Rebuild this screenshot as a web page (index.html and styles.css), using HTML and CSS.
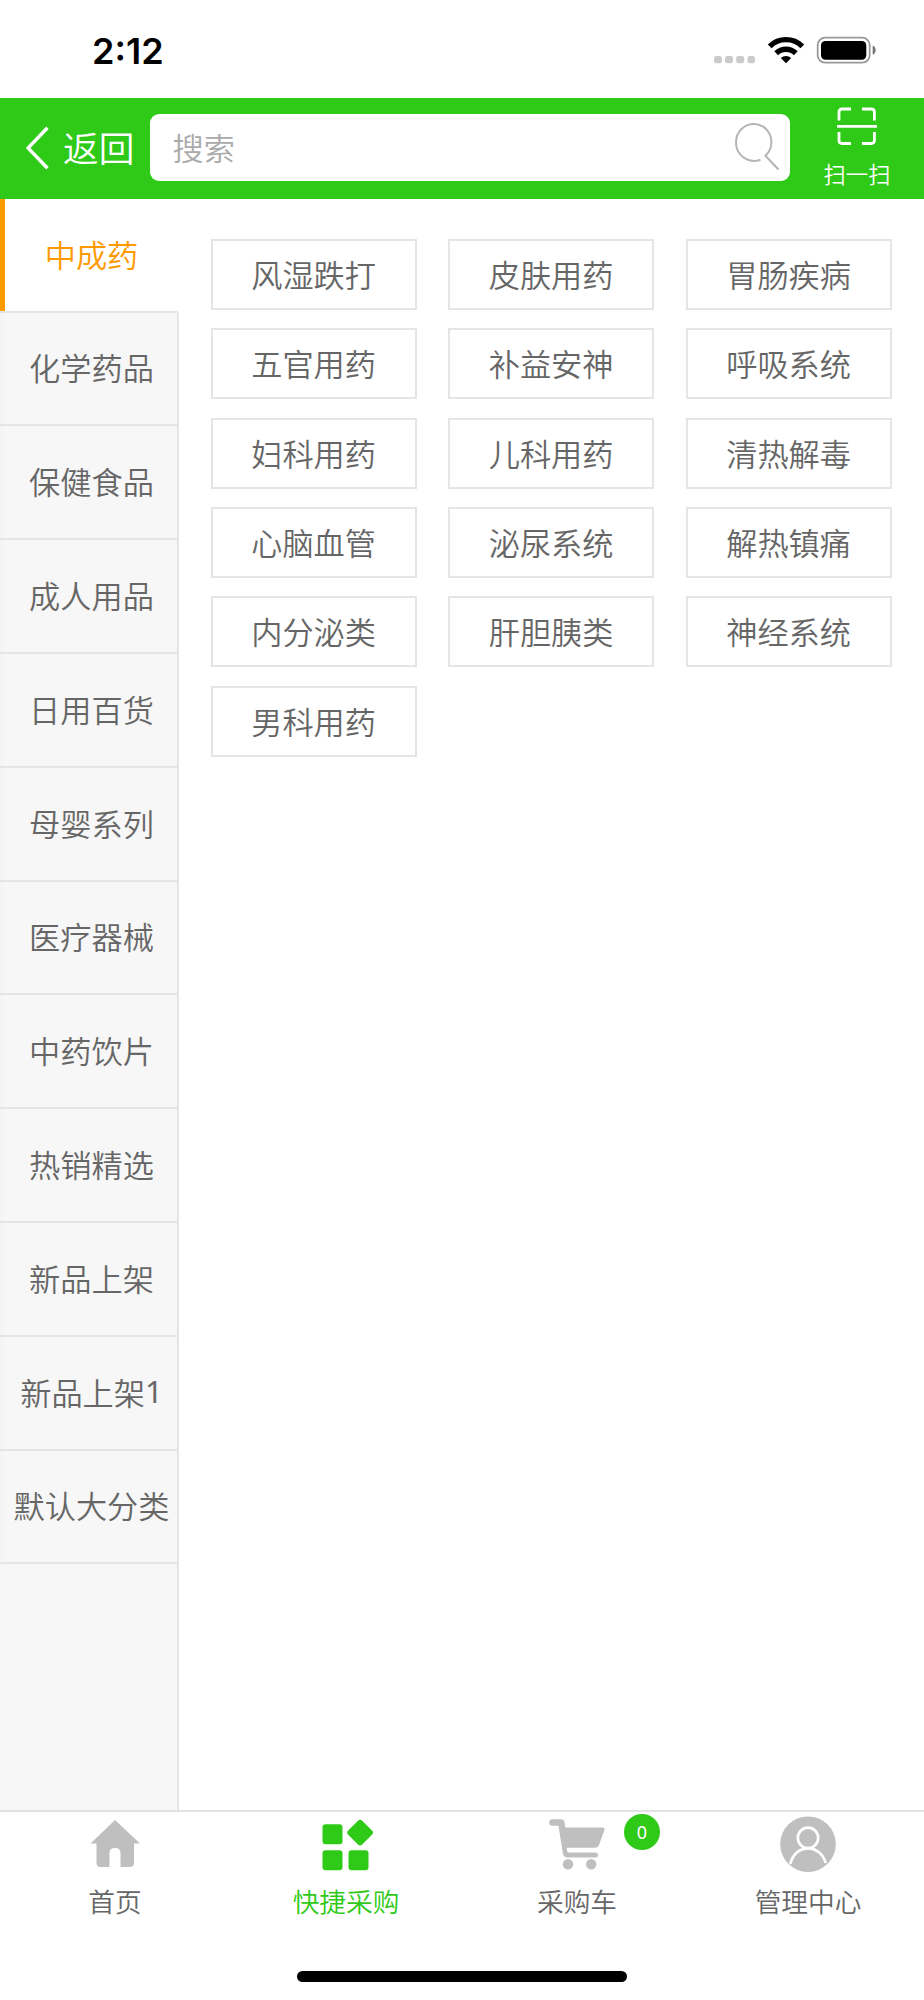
FILE: index.html
```html
<!DOCTYPE html>
<html lang="zh-CN">
<head>
<meta charset="utf-8">
<title>快捷采购</title>
<link rel="stylesheet" href="styles.css">
</head>
<body>
<div class="app">
  <div class="status">
    <span class="time">2:12</span>
    <svg class="status-icons" width="164" height="30" viewBox="0 0 164 30">
      <g fill="#cbcbcb"><rect x="0" y="20" width="8" height="7.300" rx="2.400"/><rect x="11" y="20" width="8" height="7.300" rx="2.400"/><rect x="22.200" y="20" width="8" height="7.300" rx="2.400"/><rect x="33.500" y="20" width="7.500" height="7.300" rx="2.400"/></g>
      <g fill="none" stroke="#000" stroke-width="5.400"><path d="M55.700 10.300a23.200 23.200 0 0 1 32.600 0"/><path d="M62.200 17.200a14.100 14.100 0 0 1 19.600 0"/></g>
      <path d="M72 27.300l-5.200-5.300a7.500 7.500 0 0 1 10.400 0z"/>
      <rect x="103.700" y="1.700" width="52" height="25" rx="7.500" fill="none" stroke="#999" stroke-width="1.800"/>
      <rect x="107" y="5" width="45.300" height="18.700" rx="4.500"/>
      <path d="M158.700 9.500c4 1.500 4 7.600 0 9.200z" fill="#777"/>
    </svg>
  </div>
  <header class="header">
    <a class="back">
      <svg width="24" height="44" viewBox="0 0 24 44"><path d="M21.500 1.700L2 22l19.500 20.300" fill="none" stroke="#fff" stroke-width="3.400"/></svg>
      <span class="label">返回</span>
    </a>
    <div class="search">
      <span class="label">搜索</span>
      <svg width="46" height="50" viewBox="0 0 46 50" fill="none" stroke="#b5b5b5" stroke-width="2"><path d="M26.500 37.700C14 42.300 2 33 2 20.500 2 10 10 2 19.800 2s17.600 8 17.600 18.500c0 5-2.200 9.800-6 13.300L44.500 47.500"/></svg>
    </div>
    <a class="scan">
      <svg width="42" height="38" viewBox="0 0 42 38" fill="none" stroke="#fff" stroke-width="2.800"><path d="M3 13.500V5q0-3 3-3h9M26 2h9q3.400 0 3.400 3v8.500M3 25v8.500q0 3 3 3h9M26 36.500h9q3.400 0 3.400-3V25M1 19.300h40"/></svg>
      <span>扫一扫</span>
    </a>
  </header>
  <main class="main">
    <nav class="sidebar">
      <a class="side active">中成药</a>
      <a class="side">化学药品</a>
      <a class="side">保健食品</a>
      <a class="side">成人用品</a>
      <a class="side">日用百货</a>
      <a class="side">母婴系列</a>
      <a class="side">医疗器械</a>
      <a class="side">中药饮片</a>
      <a class="side">热销精选</a>
      <a class="side">新品上架</a>
      <a class="side">新品上架<span class="digit">1</span></a>
      <a class="side">默认大分类</a>
      <div class="filler"></div>
    </nav>
    <section class="grid">
      <a class="cell">风湿跌打</a><a class="cell">皮肤用药</a><a class="cell">胃肠疾病</a>
      <a class="cell">五官用药</a><a class="cell">补益安神</a><a class="cell">呼吸系统</a>
      <a class="cell">妇科用药</a><a class="cell">儿科用药</a><a class="cell">清热解毒</a>
      <a class="cell">心脑血管</a><a class="cell">泌尿系统</a><a class="cell">解热镇痛</a>
      <a class="cell">内分泌类</a><a class="cell">肝胆胰类</a><a class="cell">神经系统</a>
      <a class="cell">男科用药</a>
    </section>
  </main>
  <footer class="footer">
    <div class="tabs">
      <a class="tab">
        <svg width="62" height="62" viewBox="0 0 62 62" fill="#bfbfbf"><path d="M31 7L6.500 30.500h6V50q0 4 4 4h9V40q0-5 5.500-5t5.500 5v14h9q4.500 0 4.500-4V30.500h6z"/></svg>
        <span>首页</span>
      </a>
      <a class="tab current">
        <svg width="62" height="62" viewBox="0 0 62 62" fill="#2fca18"><rect x="7.500" y="11.300" width="20" height="20" rx="3"/><rect x="7.500" y="37.200" width="20" height="20" rx="3"/><rect x="33.500" y="37.200" width="20" height="20" rx="3"/><rect x="35.200" y="9.700" width="19.800" height="19.800" rx="3" transform="rotate(45 45.100 19.600)"/></svg>
        <span>快捷采购</span>
      </a>
      <a class="tab">
        <svg width="62" height="62" viewBox="0 0 62 62" fill="#bfbfbf"><path d="M6.500 6.200h8.500q3 0 3.500 3l.8 5.200H56q3.300 0 2.300 3L53 32q-1 2.700-4 2.700H20.500l.5 3q.3 1.800 2 1.800h26.500q2.500 0 2.500 2.500t-2.500 2.500H22q-4.500 0-5.200-4.500L12.500 12.800H6.500q-3.300 0-3.300-3.300t3.300-3.300z"/><circle cx="22" cy="51.200" r="5.200"/><circle cx="45.200" cy="51.200" r="5.200"/></svg>
        <span>采购车</span>
        <b class="badge">0</b>
      </a>
      <a class="tab">
        <svg width="62" height="62" viewBox="0 0 62 62"><circle cx="31" cy="31.200" r="27.800" fill="#bfbfbf"/><g fill="none" stroke="#fff" stroke-width="2.700"><circle cx="31" cy="24.900" r="10.200"/><path d="M13.300 51C15.500 41.500 22.500 35.300 31 35.300S46.500 41.500 48.700 50"/></g></svg>
        <span>管理中心</span>
      </a>
    </div>
    <div class="home-bar"></div>
  </footer>
</div>
</body>
</html>
```
FILE: styles.css
```css
* { box-sizing: border-box; }
body {
  margin: 0;
  background: #fff;
  color: #666;
  font-family: "Noto Sans CJK SC", sans-serif;
  font-weight: 350;
  font-size: 31.2px;
  line-height: 1;
}
.app { width: 924px; height: 2000px; display: flex; flex-direction: column; overflow: hidden; }
.status {
  height: 98.300px;
  flex: none;
  padding: 0 46px 0 92px;
  display: flex;
  align-items: flex-start;
  justify-content: space-between;
}
.time { font: 600 36px/36px Inter, sans-serif; color: #000; padding-top: 33px; }
.status-icons { margin-top: 36px; }
.header {
  height: 100.500px;
  flex: none;
  background: #2fca18;
  color: #fff;
  display: flex;
  align-items: flex-start;
}
.back {
  width: 149.500px;
  height: 100px;
  padding-left: 26px;
  display: flex;
  align-items: center;
  gap: 13px;
  font-size: 35.700px;
}
.label { padding-bottom: 2px; }
.search {
  width: 640.500px;
  height: 67px;
  margin-top: 15.500px;
  padding: 0 10px 0 23px;
  border-radius: 9px;
  background: #fff;
  color: #aaa;
  display: flex;
  align-items: center;
  justify-content: space-between;
}
.scan {
  flex: 1;
  display: flex;
  flex-direction: column;
  align-items: center;
  gap: 17px;
  padding-top: 9px;
  font-size: 22.300px;
}
.main { flex: 1; display: flex; min-height: 0; }
.sidebar { width: 179px; flex: none; display: flex; flex-direction: column; }
.side {
  height: 113.800px;
  flex: none;
  display: flex;
  align-items: center;
  justify-content: center;
  padding: 0 0 3px 6px;
  background: linear-gradient(90deg, #f5f5f5 5px, #f7f7f7 5px);
  border-right: 2px solid #e5e5e5;
  border-bottom: 2px solid #e5e5e5;
  white-space: nowrap;
}
.side.active {
  background: linear-gradient(90deg, #ff9900 5px, #fff 5px);
  background-clip: padding-box;
  color: #ff9900;
  border-right-color: #fff;
}
.digit { font-family: "Noto Sans", sans-serif; font-weight: 400; line-height: 0; }
.filler { flex: 1; background: #f7f7f7; border-right: 2px solid #e5e5e5; }
.grid {
  flex: 1;
  display: grid;
  grid-template-columns: repeat(3, 206px);
  grid-auto-rows: 71px;
  gap: 18.300px 31.500px;
  align-content: start;
  padding: 40.400px 0 0 31.600px;
}
.cell {
  display: flex;
  align-items: center;
  justify-content: center;
  padding-bottom: 2px;
  border: 2px solid #e5e5e5;
}
.footer {
  height: 190px;
  flex: none;
  border-top: 2px solid #e2e2e2;
  display: flex;
  flex-direction: column;
  align-items: center;
  justify-content: space-between;
  padding-bottom: 18px;
}
.tabs { width: 100%; display: grid; grid-template-columns: repeat(4, 1fr); }
.tab {
  position: relative;
  display: flex;
  flex-direction: column;
  align-items: center;
  gap: 12.500px;
  padding: 1.300px 1px 0 0;
  font-size: 26.700px;
}
.current { color: #2fca18; }
.badge {
  position: absolute;
  top: 2px;
  left: 162px;
  width: 36px;
  height: 36px;
  border-radius: 50%;
  background: #2fca18;
  color: #fff;
  font: 400 18px/37px "Noto Sans", sans-serif;
  text-align: center;
}
.home-bar { width: 330px; height: 11px; border-radius: 6px; background: #000; }
```
